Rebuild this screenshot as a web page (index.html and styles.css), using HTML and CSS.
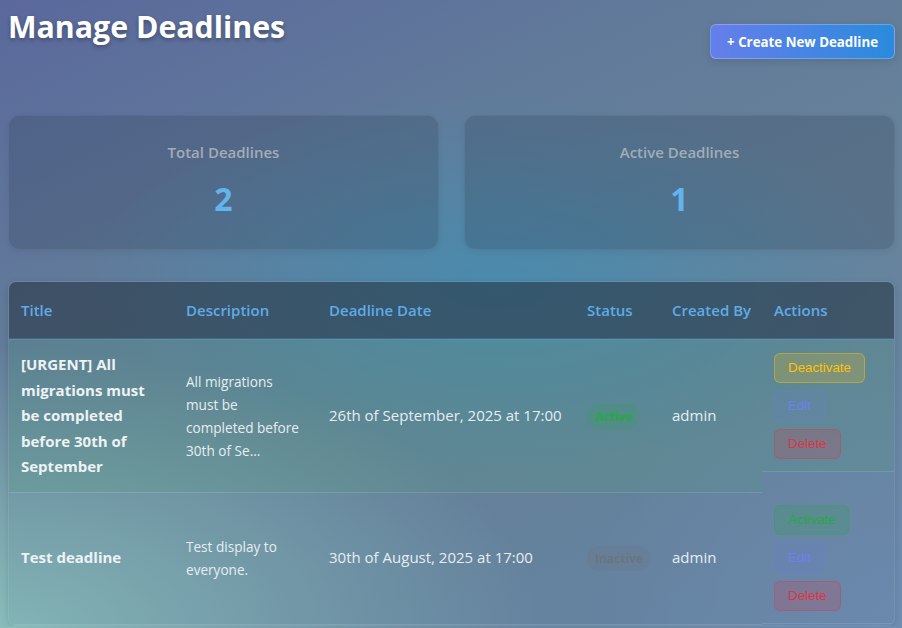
FILE: index.html
```html
<!DOCTYPE html>
<html lang="en">
<head>
<meta charset="utf-8">
<title>Manage Deadlines</title>
<link rel="stylesheet" href="styles.css">
</head>
<body>
<div class="page">
  <header class="page-header">
    <h1 class="page-title">Manage Deadlines</h1>
    <button class="btn-primary">+ Create New Deadline</button>
  </header>

  <section class="stats">
    <div class="stat-card">
      <div class="stat-label">Total Deadlines</div>
      <div class="stat-value">2</div>
    </div>
    <div class="stat-card">
      <div class="stat-label">Active Deadlines</div>
      <div class="stat-value">1</div>
    </div>
  </section>

  <section class="table-wrap">
    <table class="deadlines">
      <colgroup>
        <col class="c-title"><col class="c-desc"><col class="c-date"><col class="c-status"><col class="c-by"><col class="c-actions">
      </colgroup>
      <thead>
        <tr>
          <th>Title</th>
          <th>Description</th>
          <th>Deadline Date</th>
          <th>Status</th>
          <th>Created By</th>
          <th>Actions</th>
        </tr>
      </thead>
      <tbody>
        <tr class="row-active">
          <td class="cell-title">[URGENT] All migrations must be completed before 30th of September</td>
          <td class="cell-desc">All migrations must be completed before 30th of Se...</td>
          <td>26th of September, 2025 at 17:00</td>
          <td><span class="badge badge-active">Active</span></td>
          <td>admin</td>
          <td class="cell-actions">
            <button class="btn btn-warn">Deactivate</button>
            <button class="btn btn-edit">Edit</button>
            <button class="btn btn-del">Delete</button>
          </td>
        </tr>
        <tr>
          <td class="cell-title">Test deadline</td>
          <td class="cell-desc">Test display to everyone.</td>
          <td>30th of August, 2025 at 17:00</td>
          <td><span class="badge badge-inactive">Inactive</span></td>
          <td>admin</td>
          <td class="cell-actions">
            <button class="btn btn-ok">Activate</button>
            <button class="btn btn-edit">Edit</button>
            <button class="btn btn-del">Delete</button>
          </td>
        </tr>
      </tbody>
    </table>
  </section>
</div>
</body>
</html>
```

FILE: styles.css
```css
html {
  min-height: 100%;
}
body {
  margin: 0;
  font-family: "Segoe UI", "Open Sans", "Noto Sans", sans-serif;
  line-height: 1.7;
  color: #e6edf2;
  background:
    radial-gradient(ellipse 60% 45% at 0% 100%, rgba(140,195,190,0.9) 0%, rgba(140,195,190,0) 100%),
    radial-gradient(ellipse 45% 30% at 55% 45%, rgba(70,140,175,0.9) 0%, rgba(70,140,175,0) 100%),
    radial-gradient(ellipse 35% 45% at 100% 100%, rgba(115,145,185,0.6) 0%, rgba(115,145,185,0) 100%),
    linear-gradient(155deg, #5a689c 0%, #617a9a 30%, #67829a 55%, #6887a6 100%);
  background-attachment: fixed;
}
.page {
  padding: 0 7px 0 8px;
}
.page-header {
  display: flex;
  justify-content: space-between;
  align-items: flex-start;
}
.page-title {
  margin: 0;
  font-size: 30.3px;
  line-height: 54px;
  font-weight: 700;
  color: #ffffff;
  text-shadow: 0 2px 4px rgba(0,0,0,0.3);
}
.btn-primary {
  margin-top: 24px;
  height: 35px;
  padding: 0 16px;
  border: 1px solid rgba(255,255,255,0.25);
  border-radius: 6px;
  background: linear-gradient(90deg, #667eea 0%, #2a8bdd 100%);
  color: #ffffff;
  font-family: "Segoe UI", "Open Sans", "Noto Sans", sans-serif;
  font-size: 13.3px;
  font-weight: 700;
  box-shadow: 0 2px 8px rgba(0,0,0,0.12);
}
.stats {
  display: grid;
  grid-template-columns: 1fr 1fr;
  gap: 25px;
  margin-top: 56px;
}
.stat-card {
  padding: 24px 24px 26px;
  border-radius: 12px;
  background: rgba(40,60,80,0.24);
  border: 1px solid rgba(255,255,255,0.06);
  box-shadow: 0 2px 6px rgba(0,0,0,0.06);
  text-align: center;
}
.stat-label {
  font-size: 15px;
  line-height: 25px;
  font-weight: 600;
  color: #a3acb5;
}
.stat-value {
  margin-top: 10px;
  font-size: 32px;
  line-height: 48px;
  font-weight: 700;
  color: #63b3ed;
}
.table-wrap {
  margin-top: 31px;
  border-radius: 8px;
  overflow: hidden;
  background: rgba(80,110,140,0.1);
  border: 1px solid rgba(255,255,255,0.08);
  box-shadow: 0 2px 6px rgba(0,0,0,0.12);
}
.deadlines {
  width: 100%;
  border-collapse: collapse;
  table-layout: fixed;
}
.c-title { width: 165px; }
.c-desc { width: 143px; }
.c-date { width: 258px; }
.c-status { width: 85px; }
.c-by { width: 102px; }
.c-actions { width: auto; }
.deadlines th {
  padding: 16px 12px 15px;
  text-align: left;
  white-space: nowrap;
  font-size: 15px;
  line-height: 25px;
  font-weight: 600;
  color: #5fabe8;
  background: rgba(35,50,62,0.55);
  border-bottom: 2px solid rgba(99,179,237,0.22);
}
.deadlines td {
  padding: 12px;
  font-size: 15px;
  line-height: 25.5px;
  vertical-align: middle;
  border-bottom: 1px solid rgba(255,255,255,0.12);
}
.row-active td {
  background: rgba(80,160,120,0.2);
}
.cell-title {
  font-weight: 700;
  color: #eef2f4;
}
.deadlines td.cell-desc {
  font-size: 13.6px;
  line-height: 23px;
}
.deadlines td.cell-actions {
  display: flex;
  flex-direction: column;
  align-items: flex-start;
  gap: 8px;
  padding-top: 13px;
}
.badge {
  display: inline-block;
  padding: 0 8px;
  border-radius: 12px;
  font-size: 12px;
  line-height: 25px;
  font-weight: 700;
}
.badge-active {
  color: #28a745;
  background: rgba(40,167,69,0.18);
}
.badge-inactive {
  color: #6c757d;
  background: rgba(108,117,125,0.2);
}
.btn {
  padding: 6px 13px;
  border-radius: 6px;
  font-family: "Liberation Sans", Arial, sans-serif;
  font-size: 13.333px;
  line-height: 16px;
}
.btn-warn {
  color: #ffc107;
  background: rgba(255,193,7,0.2);
  border: 1px solid rgba(255,193,7,0.4);
}
.btn-edit {
  color: #6c80f2;
  background: rgba(102,126,234,0.12);
  border: 1px solid rgba(102,126,234,0.35);
}
.btn-del {
  color: #dc3545;
  background: rgba(220,53,69,0.2);
  border: 1px solid rgba(220,53,69,0.35);
}
.btn-ok {
  color: #28a745;
  background: rgba(40,167,69,0.2);
  border: 1px solid rgba(40,167,69,0.35);
}
```
